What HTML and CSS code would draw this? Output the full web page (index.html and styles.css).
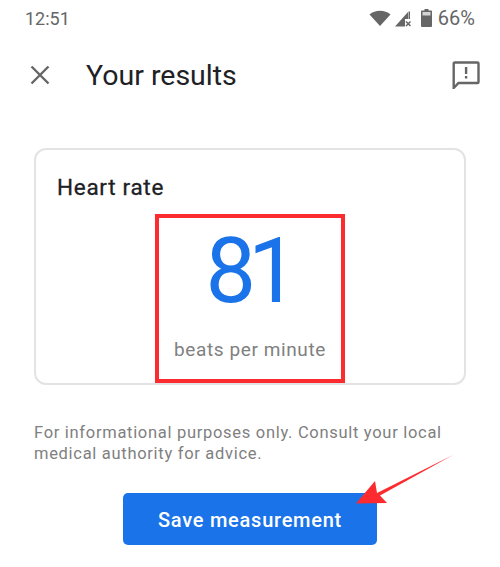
FILE: index.html
```html
<!DOCTYPE html>
<html lang="en">
<head>
    <meta charset="UTF-8">
    <meta name="viewport" content="width=device-width, initial-scale=1.0">
    <title>Your results</title>
    <link rel="stylesheet" href="styles.css">
</head>
<body>
    <div class="screen">
        <!-- Status bar -->
        <div class="status-bar">
            <span class="clock">12:51</span>
            <div class="status-icons">
                <svg class="wifi" width="22" height="16" viewBox="0 0 22 16"><path d="M0.5 4.5C3.5 2 7 0.8 11 0.8S18.500 2 21.500 4.500L11 16Z" fill="#666"/></svg>
                <svg class="signal" width="16" height="18" viewBox="0 0 16 18"><path d="M0 17.500L13 3V10H10V17.500Z" fill="#666"/><path d="M13.500 2.500H15V10H13.500Z" fill="#666"/><path d="M11 12.500L15.500 17M15.500 12.500L11 17" stroke="#666" stroke-width="1.500" fill="none"/></svg>
                <svg class="battery" width="11" height="18" viewBox="0 0 11 18"><path d="M3.500 0H7.500V1.500H10A1 1 0 0 1 11 2.500V17A1 1 0 0 1 10 18H1A1 1 0 0 1 0 17V2.500A1 1 0 0 1 1 1.500H3.500Z" fill="#666"/><path d="M1.500 3H9.500V6.500H1.500Z" fill="#d4d4d4"/></svg>
                <span class="percent">66%</span>
            </div>
        </div>

        <!-- Toolbar -->
        <div class="toolbar">
            <svg class="close-icon" width="20" height="20" viewBox="0 0 20 20"><path d="M1.500 1.500L18.500 18.500M18.500 1.500L1.500 18.500" stroke="#666" stroke-width="2.400" fill="none"/></svg>
            <h1>Your results</h1>
            <svg class="feedback-icon" width="28" height="28" viewBox="0 0 28 28"><path d="M3 1.500H25.500A1 1 0 0 1 26.500 2.500V21A1 1 0 0 1 25.500 22H6.500L1.700 27V2.500A1 1 0 0 1 3 1.500Z" stroke="#666" stroke-width="2.400" fill="none"/><path d="M12.900 6H15.300V13H12.900ZM12.900 15H15.300V17.500H12.900Z" fill="#666"/></svg>
        </div>

        <!-- Result card -->
        <div class="card">
            <h2>Heart rate</h2>
            <div class="reading">
                <div class="value">81</div>
                <div class="unit">beats per minute</div>
            </div>
        </div>

        <p class="note">For informational purposes only. Consult your local medical authority for advice.</p>

        <div class="actions">
            <button class="save-btn">Save measurement</button>
        </div>

        <!-- Annotation arrow -->
        <svg class="arrow" width="100" height="82" viewBox="0 0 100 82"><path d="M98 1L25 41.500L32 49L1 49.500L20 27L22 39Z" fill="#fb2b30"/></svg>
    </div>
</body>
</html>
```

FILE: styles.css
```css
body {
    margin: 0;
    background-color: #ffffff;
    font-family: Roboto, "Liberation Sans", sans-serif;
}

.screen {
    position: relative;
    height: 567px;
    overflow: hidden;
}

.status-bar {
    display: flex;
    justify-content: space-between;
    align-items: center;
    height: 36px;
    padding: 0 25px;
    color: #666;
}

.clock {
    font-size: 18px;
    font-weight: 400;
}

.status-icons {
    display: flex;
    align-items: center;
}

.signal {
    margin-left: 4px;
}

.battery {
    margin-left: 10px;
}

.percent {
    margin-left: 6px;
    font-size: 20px;
}

.toolbar {
    display: flex;
    align-items: center;
    height: 78px;
    padding: 0 20px 0 30px;
}

.toolbar h1 {
    flex: 1;
    margin: 0 0 0 36px;
    font-size: 28.500px;
    font-weight: 400;
    color: #202124;
}

.card {
    box-sizing: border-box;
    height: 237px;
    margin: 34px 34px 0;
    padding: 24px 21px 0;
    border: 2px solid #e3e3e6;
    border-radius: 12px;
    display: flex;
    flex-direction: column;
}

.card h2 {
    margin: 0;
    font-size: 22.500px;
    font-weight: 400;
    letter-spacing: 0.7px;
    color: #202124;
    line-height: 26px;
    -webkit-text-stroke: 0.3px #202124;
}

.reading {
    box-sizing: border-box;
    align-self: center;
    width: 190px;
    height: 170px;
    margin-top: 14px;
    border: 4px solid #fb2b30;
    text-align: center;
}

.value {
    margin-top: 8px;
    padding-right: 4px;
    font-size: 90px;
    line-height: 92px;
    letter-spacing: -8px;
    color: #1a73e8;
}

.unit {
    margin-top: 20px;
    font-size: 19px;
    letter-spacing: 0.6px;
    color: #808080;
}

.note {
    margin: 37px 34px 0;
    font-size: 16.500px;
    line-height: 21px;
    letter-spacing: 0.7px;
    color: #808080;
}

.actions {
    display: flex;
    justify-content: center;
    margin-top: 29px;
}

.save-btn {
    width: 254px;
    height: 52px;
    padding-top: 2px;
    border: none;
    border-radius: 5px;
    background-color: #1a73e8;
    color: #ffffff;
    font-family: inherit;
    font-size: 20px;
    font-weight: 500;
    letter-spacing: 0.75px;
}

.arrow {
    position: absolute;
    left: 355px;
    top: 454px;
}
```
